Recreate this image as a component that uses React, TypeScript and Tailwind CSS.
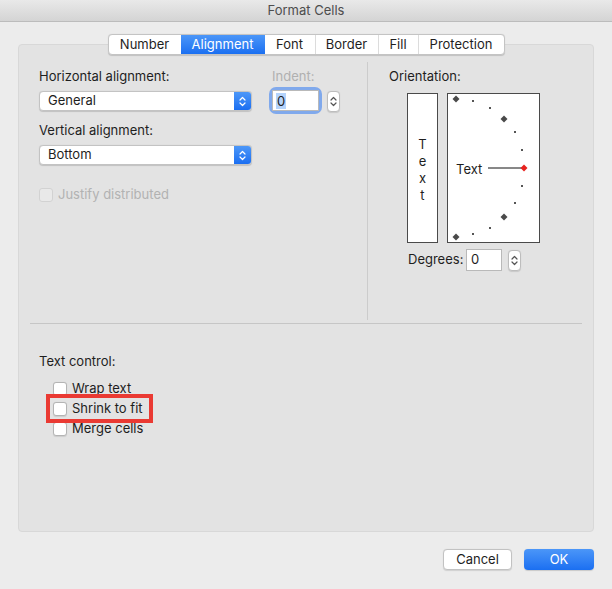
import React from "react";

const tabs = [
  { label: "Number", w: "w-[72px]" },
  { label: "Alignment", w: "w-[84px]" },
  { label: "Font", w: "w-[50px]" },
  { label: "Border", w: "w-[63px]" },
  { label: "Fill", w: "w-[40px]" },
  { label: "Protection", w: "w-[86px]" },
];

function UpDown({ className = "" }: { className?: string }) {
  return (
    <svg width="7" height="11" viewBox="0 0 7 11" className={className} fill="none">
      <path d="M1 4 L3.5 1.5 L6 4" stroke="currentColor" strokeWidth="1.2" strokeLinecap="round" strokeLinejoin="round" />
      <path d="M1 7 L3.5 9.5 L6 7" stroke="currentColor" strokeWidth="1.2" strokeLinecap="round" strokeLinejoin="round" />
    </svg>
  );
}

function Popup({ value }: { value: string }) {
  return (
    <div className="flex h-5 w-[213px] overflow-hidden rounded-[4px] border border-[#c3c3c3] bg-white shadow-[0_0.5px_1px_rgba(0,0,0,0.15)]">
      <div className="flex flex-1 items-center pl-[8px] text-[13px] text-[#1e1e1e]">{value}</div>
      <div className="flex w-[17px] items-center justify-center bg-gradient-to-b from-[#4c97f8] to-[#1a6ef1] text-white">
        <UpDown />
      </div>
    </div>
  );
}

function Stepper({ h = "h-[21px]" }: { h?: string }) {
  return (
    <div className={`flex ${h} w-[13px] items-center justify-center rounded-[4px] border border-[#bdbdbd] bg-white text-[#555] shadow-[0_0.5px_1px_rgba(0,0,0,0.12)]`}>
      <UpDown />
    </div>
  );
}

function Check({ label, disabled }: { label: string; disabled?: boolean }) {
  return (
    <div className="flex h-5 items-center gap-[5px]">
      <div
        className={
          disabled
            ? "h-[14px] w-[14px] rounded-[3px] border border-[#d2d2d2] bg-[#e9e9e9]"
            : "h-[14px] w-[14px] rounded-[3px] border border-[#b4b4b4] bg-white shadow-[0_0.5px_1px_rgba(0,0,0,0.1)]"
        }
      />
      <span className={disabled ? "text-[13px] text-[#b2b2b2]" : "text-[13px] text-[#1e1e1e]"}>{label}</span>
    </div>
  );
}

function Dial() {
  const diamonds = [
    [9, 6, false],
    [57, 26, false],
    [77, 75, true],
    [57, 124, false],
    [9, 144, false],
  ] as const;
  const dots = [
    [26, 8],
    [43, 15],
    [68, 39],
    [75, 57],
    [75, 93],
    [68, 110],
    [43, 135],
    [26, 141],
  ];
  return (
    <div className="relative h-[150px] w-[93px] border border-[#4a4a4a] bg-white">
      <svg width="93" height="150" className="absolute -left-px -top-px">
        {dots.map(([x, y], i) => (
          <rect key={i} x={x - 1} y={y - 1} width="2" height="2" fill="#555" />
        ))}
        <line x1="41" y1="75" x2="75" y2="75" stroke="#111" strokeWidth="1" />
        {diamonds.map(([x, y, red], i) => (
          <path
            key={i}
            d={`M${x} ${y - 3.5} L${x + 3.5} ${y} L${x} ${y + 3.5} L${x - 3.5} ${y} Z`}
            fill={red ? "#e8231f" : "#4a4a4a"}
          />
        ))}
      </svg>
      <span className="absolute left-[8px] top-[67px] text-[13px] leading-4 text-[#1e1e1e]">Text</span>
    </div>
  );
}

export default function App() {
  return (
    <div
      className="flex h-[589px] w-[612px] flex-col bg-[#ececec] text-[13px] text-[#1e1e1e]"
      style={{ fontFamily: "Inter, 'Liberation Sans', sans-serif" }}
    >
      {/* title bar */}
      <div className="flex h-[22px] items-center justify-center border-b border-[#bcbcbc] bg-gradient-to-b from-[#e9e9e9] to-[#d4d4d4] text-[13px] text-[#4d4d4d]">
        Format Cells
      </div>

      <div className="flex flex-1 flex-col px-[18px] pt-[12px]">
        {/* tabs */}
        <div className="relative z-10 flex justify-center">
          <div className="flex h-[21px] overflow-hidden rounded-[4px] border border-[#c4c4c4] bg-white shadow-[0_0.5px_1px_rgba(0,0,0,0.15)]">
            {tabs.map((t, i) => (
              <div
                key={t.label}
                className={
                  i === 1
                    ? `${t.w} flex items-center justify-center bg-gradient-to-b from-[#4b96f8] to-[#1a6ff1] text-white`
                    : `${t.w} flex items-center justify-center text-[#1e1e1e] ${i > 0 && i !== 2 ? "border-l border-[#dcdcdc]" : ""}`
                }
              >
                {t.label}
              </div>
            ))}
          </div>
        </div>

        {/* panel */}
        <div className="-mt-[11px] flex h-[488px] flex-col rounded-[4px] border border-[#d8d8d8] bg-[#e3e3e3]">
          <div className="mt-[17px] flex h-[258px]">
            {/* left column */}
            <div className="w-[348px] pl-[20px] pt-[6px]">
              <div className="flex">
                <div className="w-[233px] leading-4">Horizontal alignment:</div>
                <div className="leading-4 text-[#b0b0b0]">Indent:</div>
              </div>
              <div className="mt-[6px] flex items-start">
                <div className="mt-px">
                  <Popup value="General" />
                </div>
                <div className="ml-[20px] rounded-[4px] shadow-[0_0_0_3px_#80a9ec]">
                  <div className="flex h-[21px] w-[47px] items-center border border-[#b9b9b9] bg-white pl-[3px]">
                    <span className="bg-[#b4d3fb] px-px leading-4">0</span>
                  </div>
                </div>
                <div className="ml-[8px] mt-px">
                  <Stepper />
                </div>
              </div>
              <div className="mt-[10px] leading-4">Vertical alignment:</div>
              <div className="mt-[7px]">
                <Popup value="Bottom" />
              </div>
              <div className="mt-[20px]">
                <Check label="Justify distributed" disabled />
              </div>
            </div>

            {/* right column */}
            <div className="flex-1 border-l border-[#cccccc] pl-[21px] pt-[6px]">
              <div className="leading-4">Orientation:</div>
              <div className="ml-[18px] mt-[9px] flex gap-[9px]">
                <div className="flex h-[150px] w-[31px] flex-col items-center justify-center border border-[#4a4a4a] bg-white pt-[4px] leading-[17px]">
                  <span>T</span>
                  <span>e</span>
                  <span>x</span>
                  <span>t</span>
                </div>
                <Dial />
              </div>
              <div className="ml-[19px] mt-[5px] flex items-center">
                <span className="w-[58px]">Degrees:</span>
                <div className="flex h-[22px] w-[36px] items-center border border-[#b9b9b9] bg-white pl-[4px]">0</div>
                <div className="ml-[6px] mt-[2px]">
                  <Stepper />
                </div>
              </div>
            </div>
          </div>

          <div className="mx-[11px] mt-[3px] h-px bg-[#c6c6c6]" />

          <div className="pl-[20px] pt-[29px]">
            <div className="leading-4">Text control:</div>
            <div className="mt-[10px] pl-[14px]">
              <Check label="Wrap text" />
              <div className="relative">
                <Check label="Shrink to fit" />
                <div className="absolute -left-[7px] -top-[5px] h-[29px] w-[107px] border-[4px] border-[#ea3a33]" />
              </div>
              <Check label="Merge cells" />
            </div>
          </div>
        </div>

        {/* buttons */}
        <div className="mt-[17px] flex justify-end gap-[12px]">
          <div className="flex h-[21px] w-[69px] items-center justify-center rounded-[4px] border border-[#c2c2c2] bg-white shadow-[0_0.5px_1px_rgba(0,0,0,0.12)]">
            Cancel
          </div>
          <div className="flex h-[21px] w-[70px] items-center justify-center rounded-[4px] bg-gradient-to-b from-[#4b96f8] to-[#1a6ff1] text-white shadow-[0_0.5px_1px_rgba(0,0,0,0.15)]">
            OK
          </div>
        </div>
      </div>
    </div>
  );
}
